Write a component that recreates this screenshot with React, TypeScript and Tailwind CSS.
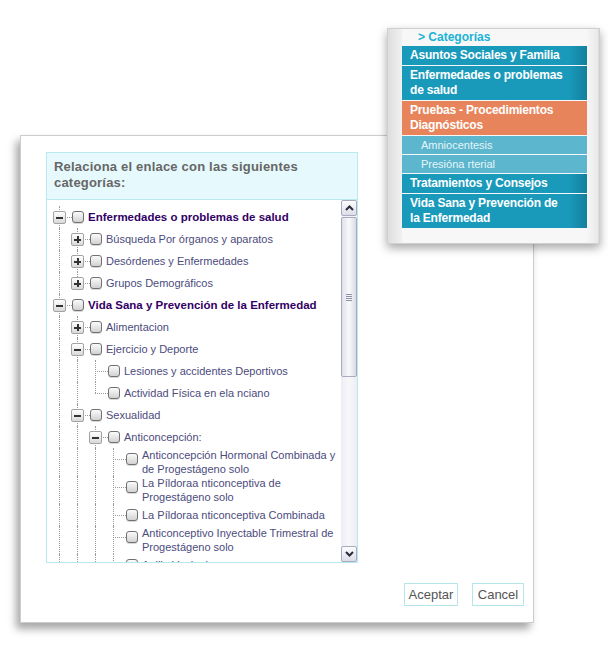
import React from 'react';

type TreeNode = {
  label: string;
  bold?: boolean;
  state?: 'open' | 'closed';
  children?: TreeNode[];
};

type Row = { node: TreeNode; depth: number; guides: boolean[]; last: boolean };

const tree: TreeNode[] = [
  {
    label: 'Enfermedades o problemas de salud',
    bold: true,
    state: 'open',
    children: [
      { label: 'Búsqueda Por órganos y aparatos', state: 'closed' },
      { label: 'Desórdenes y Enfermedades', state: 'closed' },
      { label: 'Grupos Demográficos', state: 'closed' },
    ],
  },
  {
    label: 'Vida Sana y Prevención de la Enfermedad',
    bold: true,
    state: 'open',
    children: [
      { label: 'Alimentacion', state: 'closed' },
      {
        label: 'Ejercicio y Deporte',
        state: 'open',
        children: [
          { label: 'Lesiones y accidentes Deportivos' },
          { label: 'Actividad Física en ela nciano' },
        ],
      },
      {
        label: 'Sexualidad',
        state: 'open',
        children: [
          {
            label: 'Anticoncepción:',
            state: 'open',
            children: [
              { label: 'Anticoncepción Hormonal Combinada y de Progestágeno solo' },
              { label: 'La Píldoraa nticonceptiva de Progestágeno solo' },
              { label: 'La Píldoraa nticonceptiva Combinada' },
              { label: 'Anticonceptivo Inyectable Trimestral de Progestágeno solo' },
              { label: 'Anillo Vaginal' },
            ],
          },
          { label: 'Enfermedades de Transmisión Sexual', state: 'closed' },
        ],
      },
      { label: 'Salud Mental', state: 'closed' },
    ],
  },
  { label: 'Tratamientos y Consejos', bold: true, state: 'closed' },
];

function flatten(nodes: TreeNode[], depth: number, guides: boolean[], out: Row[]) {
  nodes.forEach((n, i) => {
    const last = i === nodes.length - 1;
    out.push({ node: n, depth, guides, last });
    if (n.state === 'open' && n.children) flatten(n.children, depth + 1, [...guides, !last], out);
  });
  return out;
}

// only the rows that fit in the visible part of the scroll box
const rows = flatten(tree, 0, [], []).slice(0, 16);

const Expander = ({ open }: { open: boolean }) => (
  <div className="absolute left-0 top-[5px] flex h-[13px] w-[13px] items-center justify-center rounded-[2px] border border-[#a3a3a3] bg-gradient-to-b from-white to-[#d9d9d9]">
    <div className="relative h-[7px] w-[7px]">
      <div className="absolute left-0 top-[3px] h-[2px] w-[7px] bg-[#333]" />
      {!open && <div className="absolute left-[3px] top-0 h-[7px] w-[2px] bg-[#333]" />}
    </div>
  </div>
);

const Checkbox = () => (
  <div className="mt-[5px] h-[12px] w-[12px] shrink-0 rounded-[3px] border border-[#707070] bg-gradient-to-b from-[#fbfbfb] to-[#d2d2d2] shadow-[0_1px_0_rgba(0,0,0,0.15)]" />
);

const TreeRow = ({ row }: { row: Row }) => {
  const hasKids = !!row.node.state;
  return (
    <div className="flex min-h-[22px]">
      {row.guides.map((g, i) => (
        <div key={i} className="w-[18px] shrink-0">
          {g && <div className="ml-[6px] h-full border-l border-dotted border-[#999]" />}
        </div>
      ))}
      <div className="relative w-[19px] shrink-0">
        <div
          className={
            'absolute left-[6px] top-0 border-l border-dotted border-[#999] ' +
            (row.last ? 'h-[11px]' : 'bottom-0')
          }
        />
        <div className="absolute left-[6px] right-0 top-[11px] border-t border-dotted border-[#999]" />
        {hasKids && <Expander open={row.node.state === 'open'} />}
      </div>
      <Checkbox />
      <div className="ml-[4px] flex min-h-[22px] min-w-0 flex-1 items-center">
        <span
          className={
            row.node.bold
              ? 'text-[11.5px] font-bold leading-[14px] text-[#330066]'
              : 'text-[11px] leading-[14px] text-[#4b4b7d]'
          }
        >
          {row.node.label}
        </span>
      </div>
    </div>
  );
};

const Arrow = ({ up }: { up: boolean }) => (
  <div className="flex h-[16px] w-[16px] shrink-0 items-center justify-center rounded-[2px] border border-[#a6abc0] bg-gradient-to-b from-[#fdfdff] to-[#dcdde8]">
    <svg width="9" height="6" viewBox="0 0 9 6">
      <path
        d={up ? 'M1 5 L4.5 1.5 L8 5' : 'M1 1 L4.5 4.5 L8 1'}
        fill="none"
        stroke="#2a2a3a"
        strokeWidth="2"
      />
    </svg>
  </div>
);

const Scrollbar = () => (
  <div className="flex w-[16px] shrink-0 flex-col bg-[#f1f1f6]">
    <Arrow up />
    <div className="mt-[1px] flex h-[160px] items-center justify-center rounded-[2px] border border-[#a6abc0] bg-gradient-to-r from-[#dfe0ea] via-[#f9f9fc] to-[#d9dae6]">
      <div className="flex flex-col gap-[1px]">
        <div className="h-[1px] w-[6px] bg-[#8d91a6]" />
        <div className="h-[1px] w-[6px] bg-[#8d91a6]" />
        <div className="h-[1px] w-[6px] bg-[#8d91a6]" />
        <div className="h-[1px] w-[6px] bg-[#8d91a6]" />
      </div>
    </div>
    <div className="flex-1 bg-gradient-to-r from-[#ececf3] via-[#f8f8fb] to-[#ececf3]" />
    <Arrow up={false} />
  </div>
);

const menuItem =
  'px-[8px] py-[2px] text-[12px] font-bold leading-[15px] tracking-[-0.2px] text-white';
const blue = 'bg-gradient-to-r from-[#1a9abb] via-[#1a9abb] via-90% to-[#13809d]';

const MenuPanel = () => (
  <div className="absolute left-[387px] top-[28px] flex h-[216px] w-[213px] border border-[#cfcfcf] bg-[#f4f4f4] shadow-[0_4px_9px_rgba(0,0,0,0.35)]">
    <div className="w-[14px] shrink-0 bg-gradient-to-r from-[#dedede] to-[#f1f1f1]" />
    <div className="flex w-[185px] shrink-0 flex-col gap-[1px] bg-[#f7f7f7]">
      <div className="h-[16px] pl-[16px] text-[12px] font-bold leading-[16px] text-[#19b3d6]">
        &gt; Categorías
      </div>
      <div className={`${menuItem} ${blue}`}>Asuntos Sociales y Familia</div>
      <div className={`${menuItem} ${blue}`}>
        Enfermedades o problemas
        <br />
        de salud
      </div>
      <div className={`${menuItem} bg-[#e8845b]`}>
        Pruebas - Procedimientos
        <br />
        Diagnósticos
      </div>
      <div className="bg-[#5bb6ce] py-[2px] pl-[19px] text-[11px] leading-[14px] text-[#e6f5f9]">
        Amniocentesis
      </div>
      <div className="bg-[#5bb6ce] py-[2px] pl-[19px] text-[11px] leading-[14px] text-[#e6f5f9]">
        Presióna rterial
      </div>
      <div className={`${menuItem} ${blue}`}>Tratamientos y Consejos</div>
      <div className={`${menuItem} ${blue}`}>
        Vida Sana y Prevención de
        <br />
        la Enfermedad
      </div>
    </div>
    <div className="flex-1 border-r border-[#dcdcdc] bg-gradient-to-r from-[#f6f6f6] to-[#e9e9e9]" />
  </div>
);

export default function App() {
  return (
    <div className="relative h-[648px] w-[608px] overflow-hidden bg-white font-['Liberation_Sans',Arial,sans-serif]">
      <div className="absolute left-[20px] top-[135px] flex h-[488px] w-[514px] flex-col border border-[#cdcdcd] bg-white pl-[25px] pt-[16px] shadow-[-4px_6px_8px_rgba(0,0,0,0.35)]">
        <div className="flex h-[411px] w-[312px] flex-col border border-[#b9e8ee]">
          <div className="h-[47px] shrink-0 border-b border-[#b9e8ee] bg-[#e6f9fc] pl-[7px] pt-[6px] text-[13px] font-bold leading-[16px] tracking-[0.2px] text-[#666]">
            Relaciona el enlace con las siguientes
            <br />
            categorías:
          </div>
          <div className="flex min-h-0 flex-1">
            <div className="min-w-0 flex-1 overflow-hidden pl-[6px] pt-[6px]">
              {rows.map((r, i) => (
                <TreeRow key={i} row={r} />
              ))}
            </div>
            <Scrollbar />
          </div>
        </div>
        <div className="mr-[9px] mt-[20px] flex justify-end gap-[14px] text-[13px] text-[#555]">
          <button className="h-[23px] w-[54px] border border-[#b5e6ea] bg-white">Aceptar</button>
          <button className="h-[23px] w-[52px] border border-[#b5e6ea] bg-white">Cancel</button>
        </div>
      </div>
      <MenuPanel />
    </div>
  );
}
